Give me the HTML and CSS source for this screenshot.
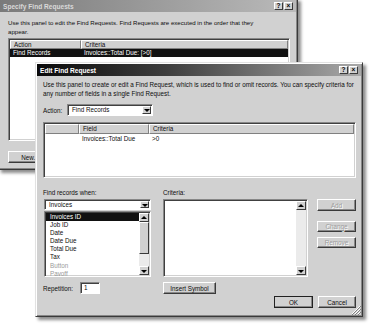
FILE: index.html
```html
<!DOCTYPE html>
<html lang="en">
<head>
    <title>Edit Find Request</title>
    <link rel="stylesheet" href="styles.css">
</head>
<body>
<div class="desk">

    <div class="win win-back">
        <div class="titlebar inactive">
            <span>Specify Find Requests</span>
            <span class="tbtns"><span class="tbtn">?</span><span class="tbtn">&times;</span></span>
        </div>
        <div class="back-body">
            <p class="intro">Use this panel to edit the Find Requests. Find Requests are executed in the order that they<br>appear.</p>
            <div class="listbox back-list">
                <div class="lhead">
                    <span class="hcell col-action">Action</span>
                    <span class="hcell col-rest">Criteria</span>
                </div>
                <div class="lrow sel">
                    <span class="col-action">Find Records</span>
                    <span class="col-rest">Invoices::Total Due: [&gt;0]</span>
                </div>
            </div>
            <div class="back-foot">
                <button class="btn btn-new">New...</button>
            </div>
        </div>
    </div>

    <div class="win win-front">
        <div class="titlebar active">
            <span>Edit Find Request</span>
            <span class="tbtns"><span class="tbtn">?</span><span class="tbtn">&times;</span></span>
        </div>
        <div class="front-body">
            <p class="intro">Use this panel to create or edit a Find Request, which is used to find or omit records. You can specify criteria for<br>any number of fields in a single Find Request.</p>

            <div class="action-row">
                <label>Action:</label>
                <div class="combo combo-action"><span class="combo-text">Find Records</span><span class="combo-btn"></span></div>
            </div>

            <div class="listbox field-list">
                <div class="lhead">
                    <span class="hcell col-blank"></span>
                    <span class="hcell col-field">Field</span>
                    <span class="hcell col-rest">Criteria</span>
                </div>
                <div class="lrow">
                    <span class="col-blank"></span>
                    <span class="col-field">Invoices::Total Due</span>
                    <span class="col-rest">&gt;0</span>
                </div>
            </div>

            <div class="editor">
                <label class="lbl-when">Find records when:</label>
                <label class="lbl-crit">Criteria:</label>

                <div class="when-col">
                    <div class="combo"><span class="combo-text">Invoices</span><span class="combo-btn"></span></div>
                    <div class="listbox fields">
                        <ul class="items">
                            <li class="sel">Invoices ID</li>
                            <li>Job ID</li>
                            <li>Date</li>
                            <li>Date Due</li>
                            <li>Total Due</li>
                            <li>Tax</li>
                            <li class="dim">Button</li>
                            <li class="dim">Payoff</li>
                        </ul>
                        <div class="scrollbar">
                            <span class="sb-btn up"></span>
                            <span class="sb-thumb"></span>
                            <span class="sb-track"></span>
                            <span class="sb-btn down"></span>
                        </div>
                    </div>
                </div>

                <div class="listbox crit-box">
                    <div class="crit-area"></div>
                    <div class="scrollbar">
                        <span class="sb-btn up"></span>
                        <span class="sb-track"></span>
                        <span class="sb-btn down"></span>
                    </div>
                </div>

                <div class="side-btns">
                    <button class="btn off btn-add">Add</button>
                    <button class="btn off">Change</button>
                    <button class="btn off">Remove</button>
                </div>

                <div class="rep">
                    <label>Repetition:</label>
                    <span class="rep-input">1</span>
                </div>
                <button class="btn btn-insert">Insert Symbol</button>
            </div>

            <div class="foot">
                <button class="btn btn-ok">OK</button>
                <button class="btn btn-cancel">Cancel</button>
            </div>
        </div>
        <svg class="grip" width="10" height="10" viewBox="0 0 10 10">
            <path d="M9 1L1 9M9 4L4 9M9 7L7 9" stroke="#fff" stroke-width="1"/>
            <path d="M10 1L1 10M10 4L4 10M10 7L7 10" stroke="#808080" stroke-width="1"/>
        </svg>
    </div>

</div>
</body>
</html>
```

FILE: styles.css
```css
* {
    box-sizing: border-box;
}

body {
    margin: 0;
    background-color: #fff;
    font-family: Tahoma, "Liberation Sans", Arial, sans-serif;
    font-size: 6.3px;
    color: #0d0d0d;
}

p {
    margin: 0;
}

ul {
    margin: 0;
    padding: 0;
    list-style: none;
}

button {
    font-family: inherit;
    font-size: inherit;
    color: inherit;
    padding: 0;
}

.desk {
    position: relative;
    width: 374px;
    height: 327px;
    overflow: hidden;
}

/* windows */

.win {
    position: absolute;
    display: flex;
    flex-direction: column;
    padding: 1px;
    background-color: #d1d1d1;
    border: 1px solid;
    border-color: #e2e2e2 #3a3a3a #3a3a3a #e2e2e2;
    box-shadow: inset 1px 1px #fff, inset -1px -1px #878787, 3px 3px 3px rgba(0, 0, 0, 0.45);
}

.win-back {
    left: -2px;
    top: -2px;
    width: 300px;
    height: 172px;
}

.win-front {
    left: 35px;
    top: 62px;
    width: 328px;
    height: 255px;
}

.titlebar {
    height: 12px;
    flex-shrink: 0;
    display: flex;
    align-items: center;
    justify-content: space-between;
    padding: 0 3px 0 3px;
    font-weight: bold;
    font-size: 6.6px;
}

.active {
    background: linear-gradient(to right, #0a0a0a, #3e3e3e 40%, #a9a9a9);
    color: #fff;
}

.inactive {
    background: linear-gradient(to right, #7a7a7a, #bababa);
    color: #d9d9d9;
}

.tbtns {
    display: flex;
    gap: 1px;
}

.tbtn {
    width: 9px;
    height: 8px;
    background-color: #d1d1d1;
    border: 1px solid;
    border-color: #fff #3a3a3a #3a3a3a #fff;
    color: #000;
    font-size: 6.5px;
    line-height: 6px;
    text-align: center;
}

.intro {
    line-height: 8.5px;
}

.back-body .intro {
    font-size: 6.1px;
}

/* shared controls */

.btn {
    background-color: #d1d1d1;
    border: 1px solid;
    border-color: #fff #3a3a3a #3a3a3a #fff;
    box-shadow: inset -1px -1px #888;
    text-align: center;
    line-height: 9px;
}

.btn.off {
    color: #9c9c9c;
    text-shadow: 1px 1px #fff;
}

.listbox {
    background-color: #fff;
    border: 1px solid;
    border-color: #878787 #fff #fff #878787;
    box-shadow: inset 1px 1px #404040, inset -1px -1px #d1d1d1;
    padding: 1px;
}

.lhead {
    display: flex;
    height: 9px;
}

.hcell {
    background-color: #d1d1d1;
    border: 1px solid;
    border-color: #fff #808080 #808080 #fff;
    line-height: 7px;
    padding-left: 3px;
}

.lrow {
    display: flex;
    line-height: 8px;
}

.lrow span {
    padding-left: 3px;
}

.sel {
    background-color: #111;
    color: #fff;
}

.col-rest {
    flex: 1;
}

.combo {
    display: flex;
    height: 12px;
    background-color: #fff;
    border: 1px solid;
    border-color: #878787 #fff #fff #878787;
    box-shadow: inset 1px 1px #404040;
    padding: 1px;
}

.combo-text {
    flex: 1;
    line-height: 8px;
    padding-left: 3px;
}

.combo-btn {
    position: relative;
    width: 9px;
    background-color: #d1d1d1;
    border: 1px solid;
    border-color: #fff #3a3a3a #3a3a3a #fff;
}

.combo-btn::after,
.sb-btn::after {
    content: "";
    position: absolute;
    left: 50%;
    top: 50%;
    margin-left: -3px;
    margin-top: -1px;
    border-left: 3px solid transparent;
    border-right: 3px solid transparent;
    border-top: 3px solid #000;
}

.sb-btn.up::after {
    border-top: 0;
    border-bottom: 3px solid #000;
    margin-top: -2px;
}

.scrollbar {
    width: 10px;
    display: flex;
    flex-direction: column;
    flex-shrink: 0;
}

.sb-btn {
    position: relative;
    height: 9px;
    flex-shrink: 0;
    background-color: #d1d1d1;
    border: 1px solid;
    border-color: #fff #3a3a3a #3a3a3a #fff;
}

.sb-thumb {
    height: 32px;
    flex-shrink: 0;
    background-color: #d1d1d1;
    border: 1px solid;
    border-color: #fff #3a3a3a #3a3a3a #fff;
}

.sb-track {
    flex: 1;
    background-color: #ebebeb;
}

/* back window */

.back-body {
    flex: 1;
    padding: 7px 6px 0 8px;
}

.back-list {
    margin-top: 2px;
    height: 103px;
}

.back-list .col-action {
    width: 71px;
}

.back-foot {
    margin-top: 10px;
}

.btn-new {
    width: 44px;
    height: 12px;
}

/* front window */

.front-body {
    flex: 1;
    display: flex;
    flex-direction: column;
    padding: 5px 5px 0 6px;
}

.action-row {
    display: flex;
    align-items: center;
    margin-top: 6px;
}

.action-row label {
    width: 24px;
}

.combo-action {
    width: 86px;
}

.field-list {
    margin-top: 6px;
    height: 56px;
}

.field-list .lhead {
    height: 10px;
}

.field-list .hcell {
    line-height: 8px;
}

.field-list .lrow {
    margin-top: 1px;
}

.col-blank {
    width: 34px;
}

.col-field {
    width: 70px;
}

.editor {
    display: grid;
    grid-template-columns: 108px 12px 145px 9px 39px;
    grid-template-rows: 10px 78px 17px;
    grid-template-areas:
        "when . crit . ."
        "wcol . cbox . side"
        "rep  . ins  . .";
    margin-top: 11px;
}

.lbl-when {
    grid-area: when;
    line-height: 8px;
}

.lbl-crit {
    grid-area: crit;
    line-height: 8px;
}

.when-col {
    grid-area: wcol;
    display: flex;
    flex-direction: column;
    gap: 1px;
}

.when-col .combo {
    height: 11px;
    margin-left: 1px;
}

.fields {
    display: flex;
    flex: 1;
    overflow: hidden;
    margin-left: 1px;
}

.items {
    flex: 1;
}

.items li {
    line-height: 8.1px;
    padding-left: 4px;
}

.items .dim {
    color: #9a9a9a;
}

.crit-box {
    grid-area: cbox;
    display: flex;
}

.crit-area {
    flex: 1;
}

.side-btns {
    grid-area: side;
    display: flex;
    flex-direction: column;
}

.side-btns .btn {
    height: 11px;
    margin-bottom: 5px;
}

.side-btns .btn-add {
    height: 12px;
    margin-bottom: 10px;
}

.rep {
    grid-area: rep;
    display: flex;
    align-items: flex-end;
}

.rep label {
    width: 37px;
    line-height: 10px;
}

.rep-input {
    width: 20px;
    height: 12px;
    background-color: #fff;
    border: 1px solid;
    border-color: #878787 #fff #fff #878787;
    box-shadow: inset 1px 1px #404040;
    padding-left: 3px;
    line-height: 10px;
}

.btn-insert {
    grid-area: ins;
    align-self: end;
    width: 53px;
    height: 12px;
}

.foot {
    display: flex;
    justify-content: flex-end;
    gap: 5px;
    margin-top: 2px;
}

.foot .btn {
    height: 12px;
}

.btn-ok {
    width: 39px;
    outline: 1px solid #222;
    outline-offset: -1px;
}

.btn-cancel {
    width: 38px;
}

.grip {
    position: absolute;
    right: 1px;
    bottom: 1px;
}
```
